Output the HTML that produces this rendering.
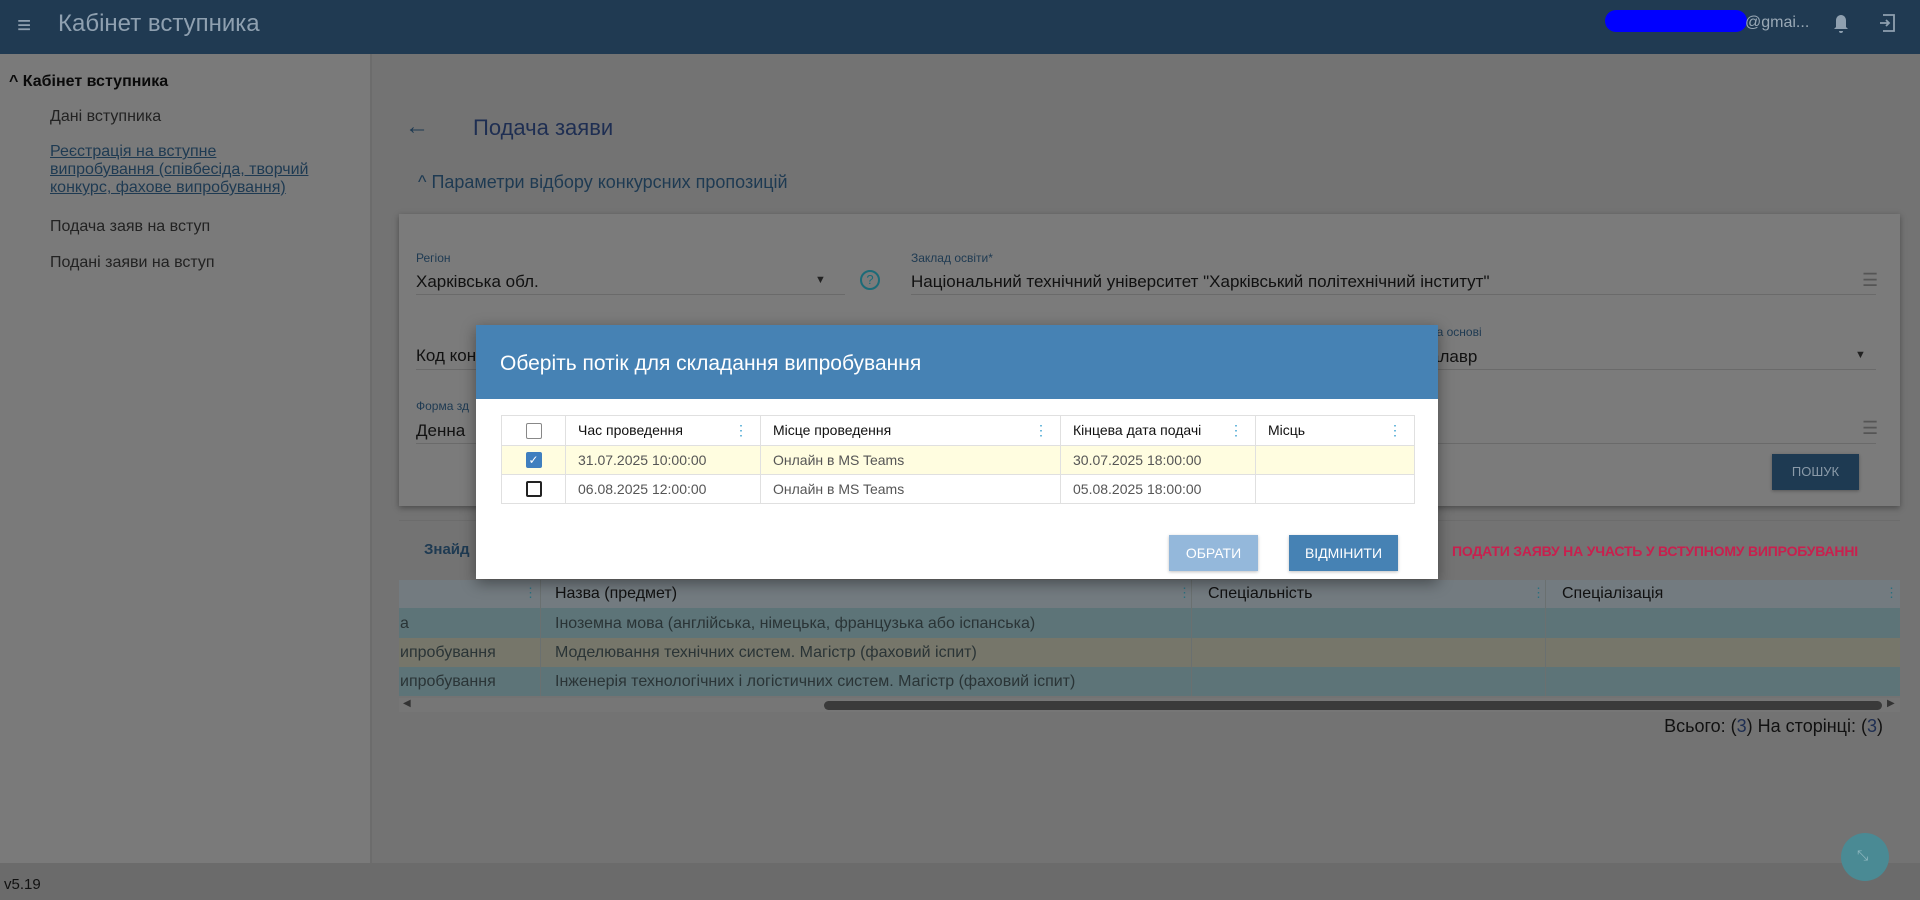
<!DOCTYPE html>
<html><head><meta charset="utf-8">
<style>
*{box-sizing:border-box;margin:0;padding:0}
body{width:1920px;height:900px;overflow:hidden;position:relative;background:#737373;font-family:"Liberation Sans",sans-serif;color:#111}
.a{position:absolute;white-space:nowrap}
.hdr{left:0;top:0;width:1920px;height:54px;background:#203a52}
.side{left:0;top:54px;width:372px;height:809px;background:#7a7a7a;border-right:2px solid #6c6c6c}
.foot{left:0;top:863px;width:1920px;height:37px;background:#6b6b6b}
.card{left:399px;top:214px;width:1501px;height:292px;background:#7b7b7b;box-shadow:0 2px 6px rgba(0,0,0,.35)}
.lbl{font-size:12px;color:#1e3a52}
.val{font-size:17px;color:#111}
.ul{height:1px;background:#6a6a6a}
.th{font-size:16px;color:#111}
.modal{left:476px;top:325px;width:962px;height:254px;background:#fff;box-shadow:0 4px 14px rgba(0,0,0,.4)}
.mh{left:0;top:0;width:962px;height:74px;background:#4682b4}
table.m{position:absolute;left:25px;top:90px;border-collapse:collapse;font-size:14px}
table.m td{border:1px solid #e0e0e0;height:29px;padding:0 12px;color:#555}
table.m tr.h td{color:#111;height:30px}
.cb{width:16px;height:16px;border:2px solid #222;border-radius:2px;margin:0 auto}
.dots{color:#3aa0d0;float:right;font-size:14px}
</style></head><body>
<div class="a hdr"></div>
<div class="a" style="left:17px;top:12px;font-size:24px;color:#8fa0b0">≡</div>
<div class="a" style="left:58px;top:10px;font-size:24px;color:#8fa0b0">Кабінет вступника</div>
<div class="a" style="left:1605px;top:10px;width:142px;height:22px;background:#0000ff;border-radius:11px"></div>
<div class="a" style="left:1745px;top:14px;font-size:16px;color:#9aa9b6">@gmai...</div>
<svg class="a" style="left:1831px;top:13px" width="20" height="22" viewBox="0 0 20 22"><path d="M10 2c-3 0-5 2.5-5 5.5V14l-2 2h14l-2-2V7.5C15 4.5 13 2 10 2zM8 18a2 2 0 0 0 4 0z" fill="#8fa0b0"/></svg>
<svg class="a" style="left:1878px;top:12px" width="20" height="22" viewBox="0 0 20 22"><path d="M5 3h11v16H5M2 11h9M8 8l3 3-3 3" fill="none" stroke="#8fa0b0" stroke-width="1.8"/></svg>

<div class="a side"></div>
<div class="a" style="left:9px;top:73px;font-size:16px;font-weight:bold;color:#0a0a0a">^ Кабінет вступника</div>
<div class="a" style="left:50px;top:108px;font-size:16px;color:#222">Дані вступника</div>
<div class="a" style="left:50px;top:143px;font-size:16px;color:#1e3a52;line-height:18px;text-decoration:underline">Реєстрація на вступне<br>випробування (співбесіда, творчий<br>конкурс, фахове випробування)</div>
<div class="a" style="left:50px;top:218px;font-size:16px;color:#222">Подача заяв на вступ</div>
<div class="a" style="left:50px;top:254px;font-size:16px;color:#222">Подані заяви на вступ</div>
<div class="a foot"></div>
<div class="a" style="left:4px;top:876px;font-size:15px;color:#111">v5.19</div>

<div class="a" style="left:405px;top:113px;font-size:24px;color:#1e3a52">←</div>
<div class="a" style="left:473px;top:115px;font-size:22px;color:#1e2e52">Подача заяви</div>
<div class="a" style="left:418px;top:172px;font-size:18px;color:#1e3a52">^ Параметри відбору конкурсних пропозицій</div>

<div class="a card"></div>
<div class="a lbl" style="left:416px;top:251px">Регіон</div>
<div class="a val" style="left:416px;top:272px">Харківська обл.</div>
<div class="a" style="left:815px;top:274px;font-size:11px;color:#222">▼</div>
<div class="a ul" style="left:416px;top:294px;width:429px"></div>
<div class="a" style="left:860px;top:270px;width:20px;height:20px;border:2px solid #1c6b78;border-radius:50%;color:#1c6b78;font-size:13px;text-align:center;line-height:16px">?</div>
<div class="a lbl" style="left:911px;top:251px">Заклад освіти*</div>
<div class="a val" style="left:911px;top:272px">Національний технічний університет "Харківський політехнічний інститут"</div>
<div class="a" style="left:1862px;top:270px;font-size:18px;color:#555">☰</div>
<div class="a ul" style="left:911px;top:294px;width:965px"></div>
<div class="a val" style="left:416px;top:346px">Код кон</div>
<div class="a ul" style="left:416px;top:369px;width:60px"></div>
<div class="a lbl" style="left:1430px;top:325px">на основі</div>
<div class="a val" style="left:1430px;top:347px">алавр</div>
<div class="a" style="left:1855px;top:349px;font-size:11px;color:#222">▼</div>
<div class="a ul" style="left:1430px;top:369px;width:446px"></div>
<div class="a lbl" style="left:416px;top:399px">Форма зд</div>
<div class="a val" style="left:416px;top:421px">Денна</div>
<div class="a ul" style="left:416px;top:443px;width:60px"></div>
<div class="a" style="left:1862px;top:418px;font-size:18px;color:#555">☰</div>
<div class="a ul" style="left:1438px;top:443px;width:438px"></div>
<div class="a" style="left:1772px;top:454px;width:87px;height:36px;background:#1e3a52;color:#8a9aa8;font-size:13px;text-align:center;line-height:36px;box-shadow:0 1px 3px rgba(0,0,0,.3)">ПОШУК</div>

<div class="a" style="left:399px;top:520px;width:1501px;height:1px;background:#6c6c6c"></div>
<div class="a" style="left:424px;top:541px;font-size:15px;font-weight:bold;color:#1e3a52">Знайд</div>
<div class="a" style="left:1452px;top:543px;font-size:14px;font-weight:bold;color:#c8204e;letter-spacing:-0.2px">ПОДАТИ ЗАЯВУ НА УЧАСТЬ У ВСТУПНОМУ ВИПРОБУВАННІ</div>

<div class="a" style="left:399px;top:580px;width:1501px;height:28px;background:#737b80"></div>
<div class="a" style="left:399px;top:608px;width:1501px;height:30px;background:#5d7478"></div>
<div class="a" style="left:399px;top:638px;width:1501px;height:29px;background:#76766a"></div>
<div class="a" style="left:399px;top:667px;width:1501px;height:29px;background:#5d7478"></div>
<div class="a" style="left:540px;top:580px;width:1px;height:116px;background:#6a7070"></div>
<div class="a" style="left:1191px;top:580px;width:1px;height:116px;background:#6a7070"></div>
<div class="a" style="left:1545px;top:580px;width:1px;height:116px;background:#6a7070"></div>
<div class="a" style="left:524px;top:585px;font-size:13px;color:#2a7080">⋮</div>
<div class="a" style="left:1178px;top:585px;font-size:13px;color:#2a7080">⋮</div>
<div class="a" style="left:1532px;top:585px;font-size:13px;color:#2a7080">⋮</div>
<div class="a" style="left:1885px;top:585px;font-size:13px;color:#2a7080">⋮</div>
<div class="a th" style="left:555px;top:585px">Назва (предмет)</div>
<div class="a th" style="left:1208px;top:585px">Спеціальність</div>
<div class="a th" style="left:1562px;top:585px">Спеціалізація</div>
<div class="a th" style="left:400px;top:615px;color:#2a3436">а</div>
<div class="a th" style="left:555px;top:615px;color:#2a3436">Іноземна мова (англійська, німецька, французька або іспанська)</div>
<div class="a th" style="left:400px;top:644px;color:#2a3436">ипробування</div>
<div class="a th" style="left:555px;top:644px;color:#2a3436">Моделювання технічних систем. Магістр (фаховий іспит)</div>
<div class="a th" style="left:400px;top:673px;color:#2a3436">ипробування</div>
<div class="a th" style="left:555px;top:673px;color:#2a3436">Інженерія технологічних і логістичних систем. Магістр (фаховий іспит)</div>
<div class="a" style="left:399px;top:698px;width:1501px;height:14px;background:#767676"></div>
<div class="a" style="left:824px;top:701px;width:1058px;height:9px;background:#3a3a3a;border-radius:5px"></div>
<div class="a" style="left:403px;top:698px;font-size:10px;color:#333">◀</div>
<div class="a" style="left:1887px;top:698px;font-size:10px;color:#333">▶</div>
<div class="a" style="left:1645px;top:716px;width:1238px;font-size:18px;color:#111"></div>
<div class="a" style="right:37px;top:716px;font-size:18px;color:#111">Всього: (<span style="color:#1e2e52">3</span>) На сторінці: (<span style="color:#1e2e52">3</span>)</div>
<div class="a" style="left:1841px;top:833px;width:48px;height:48px;border-radius:50%;background:#4a8a94"></div>
<div class="a" style="left:1857px;top:847px;font-size:14px;color:#8fb8c0">⤡</div>

<div class="a modal">
  <div class="a mh"></div>
  <div class="a" style="left:24px;top:27px;font-size:21px;color:#fff">Оберіть потік для складання випробування</div>
  <table class="m">
    <tr class="h"><td style="width:64px"><div class="cb" style="border-color:#888;border-width:1px"></div></td><td style="width:195px">Час проведення<span class="dots">⋮</span></td><td style="width:300px">Місце проведення<span class="dots">⋮</span></td><td style="width:195px">Кінцева дата подачі<span class="dots">⋮</span></td><td style="width:159px">Місць<span class="dots">⋮</span></td></tr>
    <tr style="background:#fffde0"><td><div class="cb" style="background:#3f7fbf;border-color:#3f7fbf;color:#fff;font-size:12px;line-height:13px;text-align:center">✓</div></td><td>31.07.2025 10:00:00</td><td>Онлайн в MS Teams</td><td>30.07.2025 18:00:00</td><td></td></tr>
    <tr><td><div class="cb"></div></td><td>06.08.2025 12:00:00</td><td>Онлайн в MS Teams</td><td>05.08.2025 18:00:00</td><td></td></tr>
  </table>
  <div class="a" style="left:693px;top:210px;width:89px;height:36px;background:#94b8db;color:#fff;font-size:14px;text-align:center;line-height:36px;box-shadow:0 1px 3px rgba(0,0,0,.25)">ОБРАТИ</div>
  <div class="a" style="left:813px;top:210px;width:109px;height:36px;background:#4682b4;color:#fff;font-size:14px;text-align:center;line-height:36px;box-shadow:0 1px 3px rgba(0,0,0,.25)">ВІДМІНИТИ</div>
</div>
</body></html>
